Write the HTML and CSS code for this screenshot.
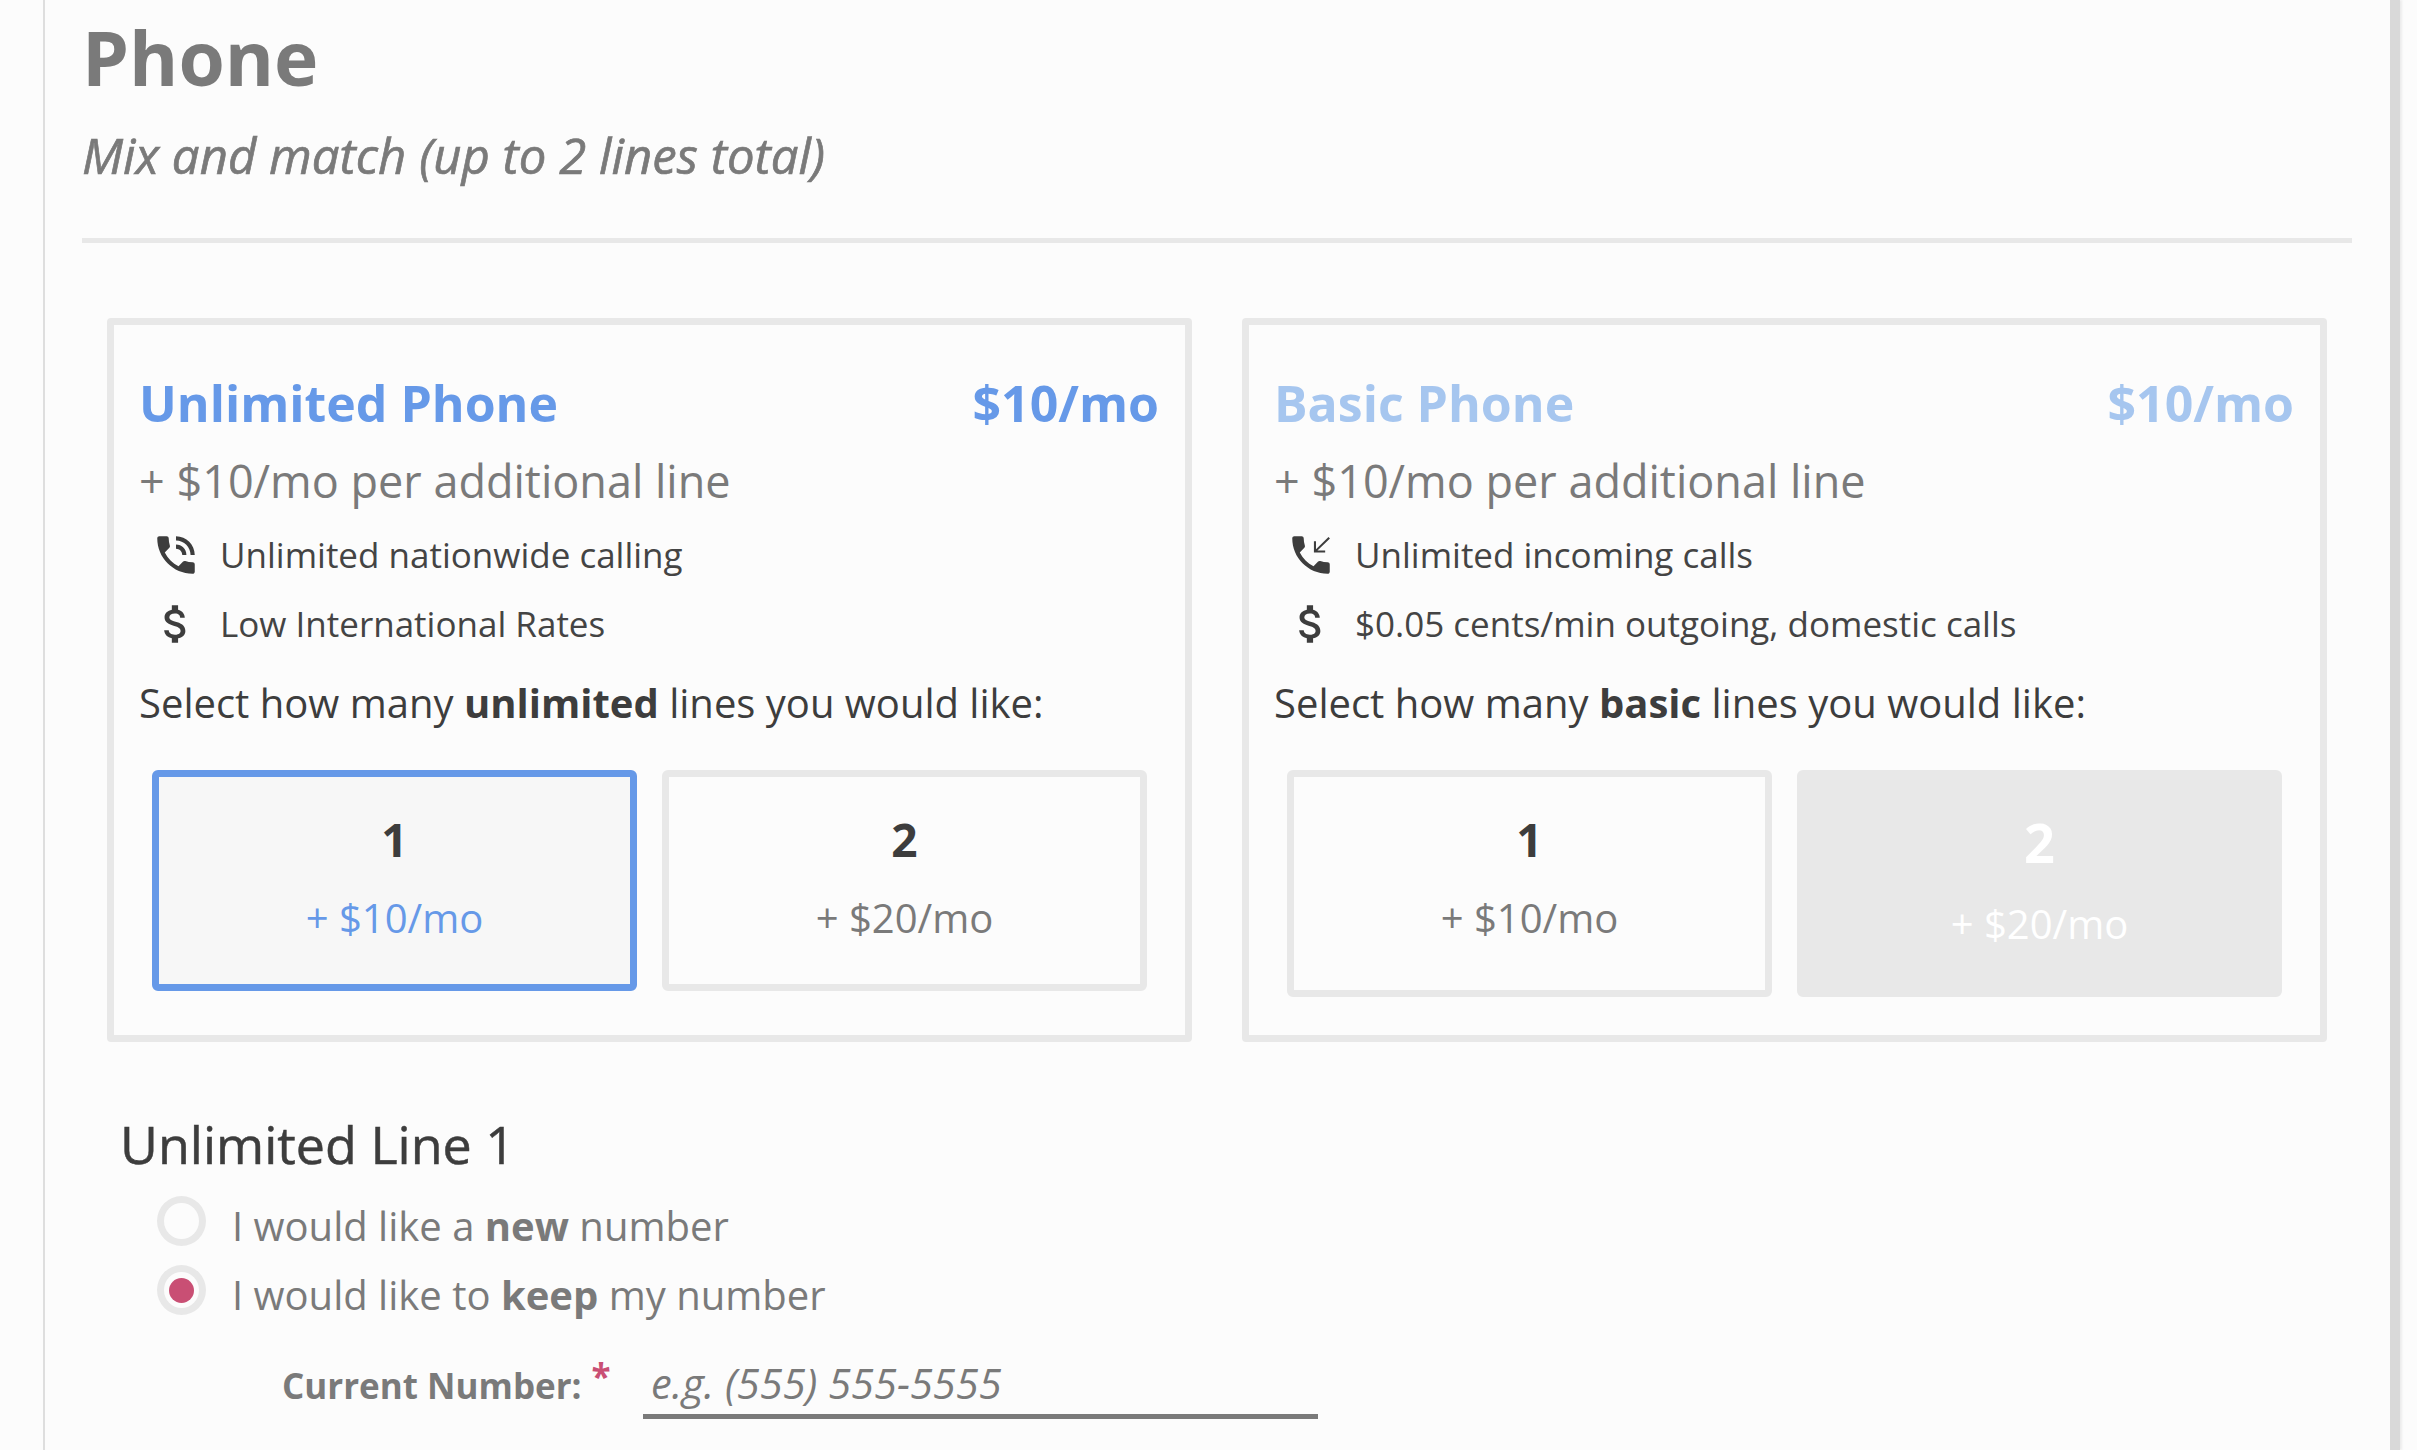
FILE: index.html
```html
<!DOCTYPE html>
<html lang="en">
<head>
<meta charset="utf-8">
<title>Phone</title>
<link rel="stylesheet" href="styles.css">
</head>
<body>
<main class="panel">
  <h1 class="page-title">Phone</h1>
  <p class="page-sub">Mix and match (up to 2 lines total)</p>
  <hr class="rule">
  <section class="plans">
    <article class="plan">
      <header class="plan-head"><span>Unlimited Phone</span><span>$10/mo</span></header>
      <div class="plan-extra">+ $10/mo per additional line</div>
      <div class="feature">
        <svg class="icon" viewBox="0 0 24 24"><path d="M20 15.5c-1.25 0-2.45-.2-3.57-.57-.35-.11-.74-.03-1.02.24l-2.2 2.2c-2.83-1.44-5.15-3.75-6.59-6.59l2.2-2.21c.28-.26.36-.65.25-1C8.7 6.45 8.5 5.25 8.5 4c0-.55-.45-1-1-1H4c-.55 0-1 .45-1 1 0 9.39 7.61 17 17 17 .55 0 1-.45 1-1v-3.5c0-.55-.45-1-1-1zM19 12h2c0-4.97-4.03-9-9-9v2c3.87 0 7 3.13 7 7zm-4 0h2c0-2.76-2.24-5-5-5v2c1.66 0 3 1.34 3 3z"/></svg>
        <span>Unlimited nationwide calling</span>
      </div>
      <div class="feature">
        <svg class="icon" viewBox="0 0 24 24"><path d="M11.8 10.9c-2.27-.59-3-1.2-3-2.15 0-1.09 1.01-1.85 2.7-1.85 1.78 0 2.44.85 2.5 2.1h2.21c-.07-1.72-1.12-3.3-3.21-3.81V3h-3v2.16c-1.94.42-3.5 1.68-3.5 3.61 0 2.31 1.91 3.46 4.7 4.13 2.5.6 3 1.48 3 2.41 0 .69-.49 1.79-2.7 1.79-2.06 0-2.87-.92-2.98-2.1h-2.2c.12 2.19 1.76 3.42 3.68 3.83V21h3v-2.15c1.95-.37 3.5-1.5 3.5-3.55 0-2.84-2.43-3.81-4.7-4.4z"/></svg>
        <span>Low International Rates</span>
      </div>
      <p class="select-label">Select how many <b>unlimited</b> lines you would like:</p>
      <div class="choices">
        <div class="choice selected"><strong>1</strong><span>+ $10/mo</span></div>
        <div class="choice"><strong>2</strong><span>+ $20/mo</span></div>
      </div>
    </article>
    <article class="plan plan-muted">
      <header class="plan-head"><span>Basic Phone</span><span>$10/mo</span></header>
      <div class="plan-extra">+ $10/mo per additional line</div>
      <div class="feature">
        <svg class="icon" viewBox="0 0 24 24"><path d="M20 15.5c-1.25 0-2.45-.2-3.57-.57-.35-.11-.74-.03-1.02.24l-2.2 2.2c-2.83-1.44-5.15-3.75-6.59-6.59l2.2-2.21c.28-.27.36-.66.25-1.01C8.7 6.45 8.5 5.25 8.5 4c0-.55-.45-1-1-1H4c-.55 0-1 .45-1 1 0 9.39 7.61 17 17 17 .55 0 1-.45 1-1v-3.5c0-.55-.45-1-1-1zM20.4 3.4 14.4 9.2V5.4h-1v5.4h5.4v-1h-3.7l6-5.7z"/></svg>
        <span>Unlimited incoming calls</span>
      </div>
      <div class="feature">
        <svg class="icon" viewBox="0 0 24 24"><path d="M11.8 10.9c-2.27-.59-3-1.2-3-2.15 0-1.09 1.01-1.85 2.7-1.85 1.78 0 2.44.85 2.5 2.1h2.21c-.07-1.72-1.12-3.3-3.21-3.81V3h-3v2.16c-1.94.42-3.5 1.68-3.5 3.61 0 2.31 1.91 3.46 4.7 4.13 2.5.6 3 1.48 3 2.41 0 .69-.49 1.79-2.7 1.79-2.06 0-2.87-.92-2.98-2.1h-2.2c.12 2.19 1.76 3.42 3.68 3.83V21h3v-2.15c1.95-.37 3.5-1.5 3.5-3.55 0-2.84-2.43-3.81-4.7-4.4z"/></svg>
        <span>$0.05 cents/min outgoing, domestic calls</span>
      </div>
      <p class="select-label">Select how many <b>basic</b> lines you would like:</p>
      <div class="choices choices-tall">
        <div class="choice"><strong>1</strong><span>+ $10/mo</span></div>
        <div class="choice disabled"><strong>2</strong><span>+ $20/mo</span></div>
      </div>
    </article>
  </section>
  <section class="line">
    <h2 class="line-title">Unlimited Line 1</h2>
    <div class="radio-row"><span class="radio"></span><span>I would like a <b>new</b> number</span></div>
    <div class="radio-row"><span class="radio checked"></span><span>I would like to <b>keep</b> my number</span></div>
    <div class="number-row">
      <label class="number-label">Current Number:<span class="req">*</span></label>
      <input class="number-input" type="text" placeholder="e.g. (555) 555-5555">
    </div>
  </section>
</main>
</body>
</html>
```

FILE: styles.css
```css
* { box-sizing: border-box; }
html, body { margin: 0; height: 1450px; overflow: hidden; }
body {
  background: #fcfcfc;
  font-family: "Open Sans", sans-serif;
  color: #7a7a7a;
  padding-left: 43px;
}
.panel {
  width: 2357px;
  height: 1450px;
  background: #fcfcfc;
  border-left: 2px solid #dedede;
  border-right: 10px solid #d9d9d9;
  box-shadow: 2px 0 2px #ececec;
  padding: 0 37px;
  overflow: hidden;
}
.page-title { margin: -2px 0 0; font-size: 75px; line-height: 118px; font-weight: 700; }
.page-sub { margin: 0; font-size: 49px; line-height: 40px; font-style: italic; padding-top: 19px; font-weight: 400; letter-spacing: 0.06px; -webkit-text-stroke: 0.7px #7a7a7a; }
.rule { margin: 63px 0 0; height: 5px; border: 0; background: #e8e8e8; width: 2270px; }
.plans { display: grid; grid-template-columns: 1085px 1085px; gap: 50px; margin: 75px 0 0 25px; }
.plan {
  height: 724px;
  border: 7px solid #e8e8e8;
  border-radius: 4px;
  padding: 39px 26px 0 25px;
  color: #7a7a7a;
}
.plan-head {
  display: flex;
  justify-content: space-between;
  font-size: 50px;
  line-height: 78px;
  font-weight: 700;
  color: #6699e8;
}
.plan-muted .plan-head { color: #a6c6ef; }
.plan-extra { font-size: 45px; line-height: 78px; }
.feature { display: flex; align-items: center; gap: 19px; height: 69px; padding-left: 12px; font-size: 35px; color: #444; }
.icon { width: 50px; height: 50px; fill: #3d3d3d; flex: none; }
.select-label { margin: 0; font-size: 40px; line-height: 90px; color: #3d3d3d; }
.select-label b { font-weight: 700; }
.choices { display: grid; grid-template-columns: 485px 485px; gap: 25px; margin: 22px 0 0 13px; height: 221px; }
.choices-tall { height: 227px; }
.choice {
  border: 7px solid #e8e8e8;
  border-radius: 6px;
  display: flex;
  flex-direction: column;
  align-items: center;
  font-size: 40px;
  color: #7a7a7a;
  padding-top: 31px;
}
.choice strong { font-size: 46px; line-height: 62px; font-weight: 700; color: #3d3d3d; }
.choice span { line-height: 62px; margin-top: 17px; }
.selected { border-color: #6699e8; background: #f7f7f7; }
.selected span { color: #6699e8; }
.disabled { background: #e8e8e8; padding-top: 34px; }
.disabled strong { color: #fff; font-size: 54px; }
.disabled span { color: #fff; margin-top: 20px; }
.line { margin: 0 0 0 38px; }
.line-title { margin: 0; padding-top: 68px; font-size: 52px; line-height: 68px; font-weight: 400; color: #3d3d3d; -webkit-text-stroke: 0.5px #3d3d3d; }
.radio-row { display: flex; align-items: center; gap: 26px; height: 69px; padding-left: 37px; font-size: 40px; color: #7a7a7a; }
.radio-row:first-of-type { margin-top: 13px; }
.radio { width: 49px; height: 50px; border: 7px solid #e8e8e8; border-radius: 50%; margin-top: -9px; display: flex; align-items: center; justify-content: center; flex: none; }
.checked::after { content: ""; width: 25px; height: 25px; border-radius: 50%; background: #c94f74; }
.number-row { display: flex; align-items: center; padding: 26px 0 0 162px; }
.number-label { font-size: 35px; font-weight: 700; width: 361px; display: block; margin-top: -4px; }
.req { color: #c94f74; margin-left: 10px; position: relative; top: -10px; }
.number-input { width: 675px; height: 64px; border: 0; border-bottom: 5px solid #7a7a7a; background: transparent; font: italic 41.6px "Open Sans", sans-serif; padding: 0 8px 3px; outline: none; }
.number-input::placeholder { color: #7a7a7a; opacity: 1; }
```
